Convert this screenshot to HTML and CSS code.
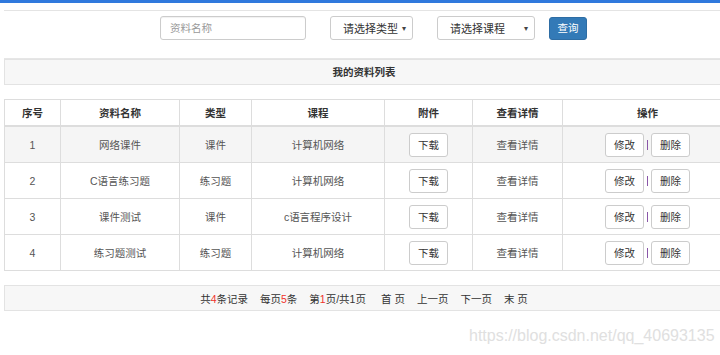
FILE: index.html
```html
<!DOCTYPE html>
<html lang="zh">
<head>
<meta charset="utf-8">
<link rel="stylesheet" href="styles.css">
</head>
<body>
<div class="topbar"></div>
<div class="page">
  <div class="search">
    <div class="input">资料名称</div>
    <div class="select sel-type"><span>请选择类型</span><span class="caret">▾</span></div>
    <div class="select sel-course"><span>请选择课程</span><span class="caret">▾</span></div>
    <div class="btn-primary">查询</div>
  </div>
  <div class="panel-head">我的资料列表</div>
  <table class="grid">
    <colgroup>
      <col style="width:56px"><col style="width:119px"><col style="width:72px"><col style="width:133px"><col style="width:88px"><col style="width:90px"><col style="width:170px">
    </colgroup>
    <thead>
      <tr><th>序号</th><th>资料名称</th><th>类型</th><th>课程</th><th>附件</th><th>查看详情</th><th>操作</th></tr>
    </thead>
    <tbody>
      <tr class="hover"><td>1</td><td>网络课件</td><td>课件</td><td>计算机网络</td><td><span class="btn">下载</span></td><td>查看详情</td><td><span class="btn">修改</span><span class="sep"></span><span class="btn">删除</span></td></tr>
      <tr><td>2</td><td>C语言练习题</td><td>练习题</td><td>计算机网络</td><td><span class="btn">下载</span></td><td>查看详情</td><td><span class="btn">修改</span><span class="sep"></span><span class="btn">删除</span></td></tr>
      <tr><td>3</td><td>课件测试</td><td>课件</td><td>c语言程序设计</td><td><span class="btn">下载</span></td><td>查看详情</td><td><span class="btn">修改</span><span class="sep"></span><span class="btn">删除</span></td></tr>
      <tr><td>4</td><td>练习题测试</td><td>练习题</td><td>计算机网络</td><td><span class="btn">下载</span></td><td>查看详情</td><td><span class="btn">修改</span><span class="sep"></span><span class="btn">删除</span></td></tr>
    </tbody>
  </table>
  <div class="pager">
    <span>共<b>4</b>条记录</span>
    <span>每页<b>5</b>条</span>
    <span>第<b>1</b>页/共1页</span>
    <span class="link first">首 页</span>
    <span class="link">上一页</span>
    <span class="link">下一页</span>
    <span class="link">末 页</span>
  </div>
  <div class="watermark">https://blog.csdn.net/qq_40693135</div>
</div>
</body>
</html>
```
FILE: styles.css
```css
html, body {
  margin: 0;
  padding: 0;
  background: #fff;
  overflow: hidden;
}
body {
  width: 720px;
  height: 355px;
  font-family: "Liberation Sans", "Noto Sans CJK SC", sans-serif;
  font-size: 10.5px;
  color: #333;
}
.topbar {
  height: 3px;
  background: #3079dd;
}
.page {
  padding-left: 4px;
  width: 732px;
}
.search {
  margin-top: 7px;
  border-top: 1px solid #e4e4e4;
  border-bottom: 1px solid #e6e6e6;
  height: 49px;
  display: flex;
  align-items: flex-start;
  padding-left: 156px;
  box-sizing: border-box;
}
.input {
  margin-top: 5px;
  width: 146px;
  height: 24px;
  box-sizing: border-box;
  border: 1px solid #ccc;
  border-radius: 3px;
  padding-left: 9px;
  line-height: 22px;
  color: #999;
  box-shadow: inset 0 1px 1px rgba(0,0,0,0.06);
}
.select {
  margin-top: 5px;
  height: 24px;
  box-sizing: border-box;
  border: 1px solid #ccc;
  border-radius: 3px;
  display: flex;
  align-items: center;
  justify-content: space-between;
  padding: 0 6px 0 12px;
  color: #333;
  font-size: 11px;
}
.select .caret {
  font-size: 8px;
  color: #444;
}
.sel-type {
  margin-left: 24px;
  width: 83px;
}
.sel-course {
  margin-left: 24px;
  width: 98px;
}
.btn-primary {
  margin-top: 6px;
  margin-left: 14px;
  width: 38px;
  height: 23px;
  box-sizing: border-box;
  background: #337ab7;
  border: 1px solid #2e6da4;
  border-radius: 3px;
  color: #fff;
  text-align: center;
  line-height: 21px;
  font-size: 10.5px;
}
.panel-head {
  width: 720px;
  height: 26px;
  box-sizing: border-box;
  border: 1px solid #e3e3e3;
  background: #f7f7f7;
  text-align: center;
  line-height: 24px;
  font-weight: bold;
  color: #333;
}
.grid {
  margin-top: 14px;
  border-collapse: collapse;
  table-layout: fixed;
  width: 728px;
}
.grid th, .grid td {
  border: 1px solid #dddddd;
  text-align: center;
  vertical-align: middle;
  padding: 0;
}
.grid th {
  height: 25px;
  font-weight: bold;
  border-bottom-width: 2px;
}
.grid td {
  height: 35px;
  color: #555;
}
.grid tr.hover td {
  background: #f5f5f5;
}
.btn {
  display: inline-block;
  width: 39px;
  height: 24px;
  box-sizing: border-box;
  border: 1px solid #ccc;
  border-radius: 3px;
  background: #fff;
  line-height: 22px;
  color: #333;
  vertical-align: middle;
}
.sep {
  display: inline-block;
  width: 1px;
  height: 10px;
  margin: 0 3px;
  background: #8a56a8;
  vertical-align: middle;
}
.pager {
  width: 720px;
  margin-top: 14px;
  height: 26px;
  box-sizing: border-box;
  border: 1px solid #e3e3e3;
  background: #f7f7f7;
  display: flex;
  justify-content: center;
  align-items: center;
  color: #333;
}
.pager span {
  margin: 0 6px;
}
.pager span.first {
  margin-left: 9px;
}
.pager b {
  color: #f0332c;
  font-weight: normal;
}
.watermark {
  margin-top: 16px;
  padding-left: 465px;
  font-size: 16px;
  color: #e0e0e0;
  font-family: "Liberation Sans", sans-serif;
}
```
